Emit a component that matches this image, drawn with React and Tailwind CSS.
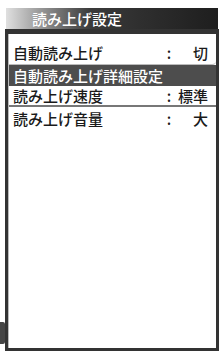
import React from "react";

const font = { fontFamily: '"Noto Sans CJK JP", "Noto Sans", sans-serif' };

const Row = ({ label, value, className = "" }) => (
  <div className={`flex items-center pl-[4px] pr-[8px] text-[15px] leading-none ${className}`}>
    <span className="flex-1">{label}</span>
    {value && <span className="w-[10px] text-center">:</span>}
    {value && <span className="w-[34px] text-right">{value}</span>}
  </div>
);

export default function App() {
  return (
    <div className="relative w-[220px] h-[351px] bg-white overflow-hidden text-[#1a1a1a] font-medium" style={font}>
      {/* header */}
      <div className="mt-[8px] ml-[6px] mr-[2px] h-[21px] flex items-center pl-[26px] text-[15px] text-white bg-gradient-to-r from-[#e0e0e0] via-[#3a3a3a] via-40% to-[#1e1e1e] leading-none">
        読み上げ設定
      </div>

      {/* frame */}
      <div className="ml-[5px] w-[214px] h-[322px] border-x-[3px] border-b-[3px] border-t-[5px] border-[#333] bg-white">
        <div className="h-full border-l border-[#bbb] flex flex-col">
          <Row
            label="自動読み上げ"
            value="切"
            className="h-[31px] pt-[6px] bg-white rounded-br-[4px] border-b border-[#bbb]"
          />
          <div className="h-[21px] flex items-center pl-[4px] text-[15px] leading-none text-white bg-[#4d4d4d]">
            自動読み上げ詳細設定
          </div>
          <Row label="読み上げ速度" value="標準" className="h-[21px] border-b-[2px] border-[#777]" />
          <Row label="読み上げ音量" value="大" className="h-[22px]" />
        </div>
      </div>

      {/* scroll marker at bottom left */}
      <div className="absolute left-0 top-[322px] w-[5px] h-[22px] bg-[#444] rounded-r-[2px]" />
    </div>
  );
}
